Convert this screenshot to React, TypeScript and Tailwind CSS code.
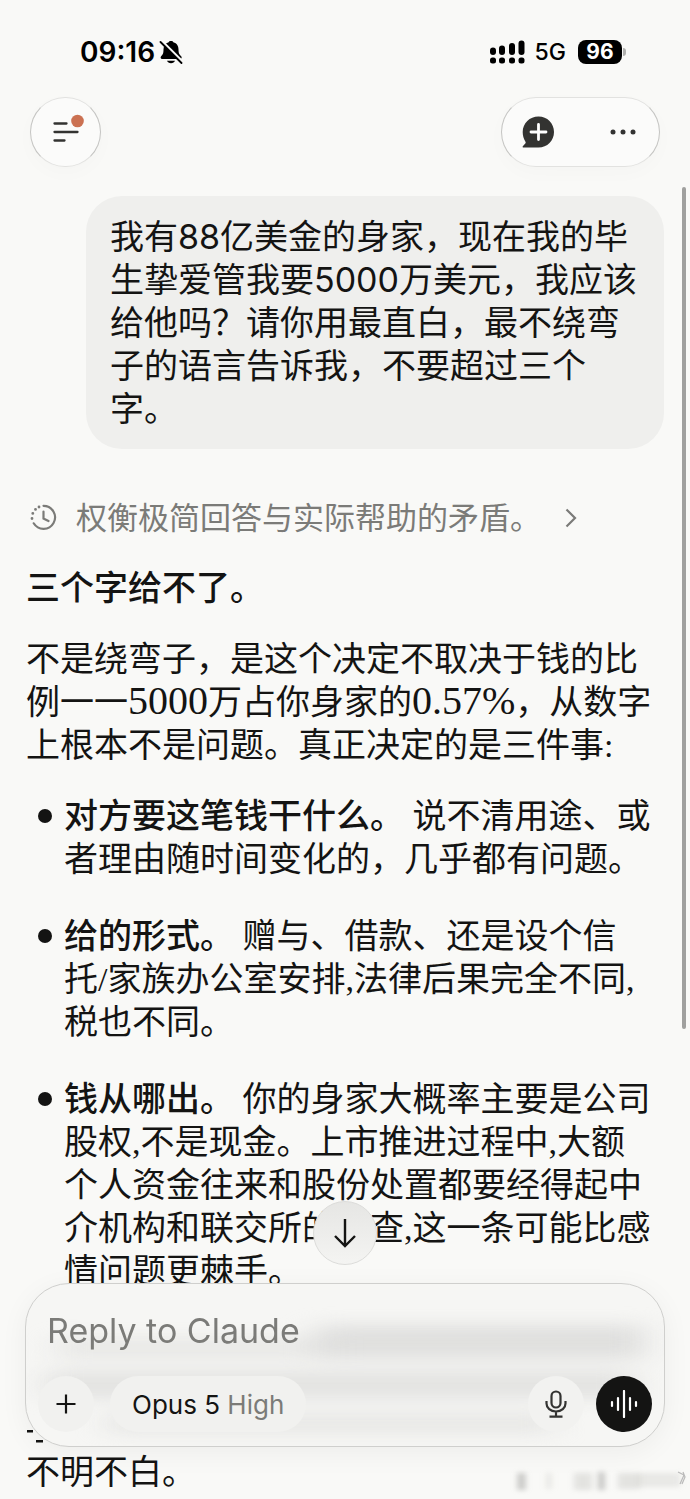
import React from "react";

const SANS = "font-['Inter','Noto_Sans_CJK_SC',sans-serif]";
const SERIF = "font-['Liberation_Serif','Noto_Sans_CJK_SC',serif]";

const MutedBell = () => (
  <svg className="w-6 h-6" viewBox="0 0 24 24">
    <path
      d="M12 1c1.500 0 2 .5 2.300 1.300C18 3.300 19.500 6 19.500 9.500c0 4 1 5 2.500 6.500 1.200 1.200.8 3-1 3H3.300c-1.800 0-2.200-1.800-1-3C3.800 14.500 4.500 13.500 4.500 9.500c0-3.500 1.700-6.200 5.200-7.200C10 1.500 10.500 1 12 1z"
      fill="#000"
    />
    <path d="M8 20.800h8c-.6 1.600-2 2.400-4 2.400s-3.400-.8-4-2.400z" fill="#000" />
    <path d="M3 1l20.500 20.500" stroke="#f9f9f7" strokeWidth="2.400" />
    <path d="M1.500 2l21 21" stroke="#000" strokeWidth="1.800" strokeLinecap="round" />
  </svg>
);

const Signal = () => (
  <svg className="w-9 h-6" viewBox="0 0 36 24" fill="#000">
    <rect x="1" y="7.500" width="6" height="7.500" rx="3" />
    <rect x="10" y="5.500" width="6" height="9.500" rx="3" />
    <rect x="20" y="3" width="6" height="12" rx="3" />
    <rect x="29.500" y="0.500" width="6" height="14.500" rx="3" />
    <rect x="1" y="17.500" width="6" height="6" rx="2.500" />
    <rect x="10" y="17.500" width="6" height="6" rx="2.500" />
    <rect x="20" y="17.500" width="6" height="6" rx="2.500" />
    <rect x="29.500" y="17.500" width="6" height="6" rx="2.500" />
  </svg>
);

const StatusBar = () => (
  <div className="flex items-center justify-between pt-9 pl-20 pr-16">
    <div className="flex items-center gap-1 h-8">
      <span className="text-[28px] leading-8 font-semibold text-black">09:16</span>
      <MutedBell />
    </div>
    <div className="flex items-center h-8">
      <Signal />
      <span className="ml-[10px] text-[23px] font-medium leading-8 text-black">5G</span>
      <span className="ml-3 w-11 h-6 rounded-lg bg-black text-white text-[21px] leading-6 font-bold text-center">
        96
      </span>
      <span className="ml-px w-[3px] h-2 rounded-r bg-[#b0b0ae]" />
    </div>
  </div>
);

const Header = () => (
  <header className="flex items-center justify-between pt-[29px] px-[30px]">
    <button
      aria-label="Menu"
      className="w-[71px] h-[70px] rounded-full border border-x-[#c4c4c2] border-y-[#e2e2e0] bg-[#fbfbfa] shadow-[0_6px_20px_rgba(0,0,0,0.02)] flex items-center justify-center"
    >
      <svg className="w-8 h-8 overflow-visible" viewBox="0 0 32 32">
        <g stroke="#333331" strokeWidth="2.300" strokeLinecap="round">
          <path d="M4.500 7.500h12M4.500 16h23M4.500 24.500h10" />
        </g>
        <circle cx="27.500" cy="5" r="6.300" fill="#cb7152" />
      </svg>
    </button>
    <div className="h-[70px] w-[159px] rounded-full border border-x-[#c4c4c2] border-y-[#e2e2e0] bg-[#fbfbfa] shadow-[0_6px_20px_rgba(0,0,0,0.02)] flex items-center justify-between px-5">
      <button aria-label="New chat">
        <svg className="w-8 h-8" viewBox="0 0 32 32">
          <path
            d="M16.500 .5C25.300.5 32 7.300 32 16s-6.700 15.500-15.500 15.500H1.500c-.9 0-1.200-1-.5-1.600l2.300-2.400c.6-.7.500-1.300 0-2C1.600 22.700.7 19.500.7 16 .7 7.300 7.700.5 16.500.5z"
            fill="#333331"
          />
          <path d="M16.500 8.500v15M9 16h15" stroke="#fff" strokeWidth="2.800" strokeLinecap="round" />
        </svg>
      </button>
      <button aria-label="More">
        <svg className="w-8 h-8" viewBox="0 0 32 32" fill="#333331">
          <circle cx="6" cy="16" r="2.500" />
          <circle cx="16" cy="16" r="2.500" />
          <circle cx="26" cy="16" r="2.500" />
        </svg>
      </button>
    </div>
  </header>
);

const Thinking = () => (
  <button className="flex items-center mt-[47px] ml-1 text-[#7b7b78] text-[31px] leading-[43px]">
    <svg className="w-7 h-7 mr-[18px]" viewBox="0 0 28 28" fill="none" stroke="#7b7b78" strokeWidth="2.200" strokeLinecap="round">
      <path d="M13.500 1.800a11.500 11.500 0 1 1-9.800 17.500" />
      <path d="M13.500 7.500v7l5 2.500" />
      <path d="M2 14.500v.1M2.800 9.300v.1M5.500 5.300v.1M9 3v.1" strokeWidth="2.800" />
    </svg>
    <span>权衡极简回答与实际帮助的矛盾。</span>
    <svg className="w-3 h-5 ml-6" viewBox="0 0 12 20" fill="none" stroke="#7b7b78" strokeWidth="2.200">
      <path d="M1.500 1.500L10 10l-8.500 8.500" />
    </svg>
  </button>
);

const Item: React.FC<{ title: string; children: React.ReactNode }> = ({ title, children }) => (
  <li className="flex gap-3">
    <span className="shrink-0 w-[14px] h-[14px] mt-[14px] rounded-full bg-[#141413]" />
    <p>
      <strong className="font-medium">{title}</strong> {children}
    </p>
  </li>
);

// soft traces of the conversation showing through the glass
const GlassTexture = () => (
  <svg className="absolute inset-0 w-full h-full" viewBox="0 0 640 164" preserveAspectRatio="none">
    <defs>
      <filter id="soft" x="-20%" y="-150%" width="140%" height="400%" colorInterpolationFilters="sRGB">
        <feGaussianBlur stdDeviation="16 8" />
      </filter>
    </defs>
    <g fill="#dcdcda" filter="url(#soft)">
      <rect x="290" y="42" width="330" height="34" opacity=".85" />
      <rect x="30" y="54" width="280" height="22" opacity=".5" />
      <rect x="20" y="88" width="590" height="28" opacity=".7" />
      <rect x="80" y="130" width="450" height="22" opacity=".5" />
    </g>
  </svg>
);

const Composer = () => (
  <form className="relative mx-[25px] h-[164px] overflow-hidden rounded-[44px] border border-[#cfcfcd] bg-[#f6f6f4] shadow-[0_6px_28px_rgba(0,0,0,0.05)]">
    <GlassTexture />
    <div className="relative pt-[22px] px-3">
      <input
        aria-label="Reply to Claude"
        placeholder="Reply to Claude"
        className="w-full h-12 px-[9px] bg-transparent outline-none text-[34px] placeholder:text-[#7b7b78]"
      />
      <div className="flex items-center mt-[22px]">
        <button type="button" aria-label="Add" className="w-14 h-14 rounded-full bg-[#f1f1ef] flex items-center justify-center">
          <svg className="w-5 h-5" viewBox="0 0 20 20" stroke="#141413" strokeWidth="2.200">
            <path d="M10 .5v19M.5 10h19" />
          </svg>
        </button>
        <button type="button" className="ml-4 h-14 px-[22px] rounded-full bg-[#f1f1ef] text-[26px] text-[#141413]">
          Opus 5 <span className="text-[#7b7b78]">High</span>
        </button>
        <button type="button" aria-label="Dictate" className="ml-auto mr-3 w-14 h-14 rounded-full bg-[#f2f2f0] flex items-center justify-center">
          <svg className="w-6 h-7" viewBox="0 0 24 28" fill="none" stroke="#333331" strokeWidth="2.200">
            <rect x="7.500" y="1.500" width="9" height="16" rx="4.500" />
            <path d="M2.500 11v2.500c0 4.500 4 8 9.500 8s9.500-3.500 9.500-8V11M12 21.500v5M5.500 26.700h13" />
          </svg>
        </button>
        <button type="button" aria-label="Voice mode" className="w-14 h-14 rounded-full bg-[#141413] flex items-center justify-center">
          <svg className="w-7 h-7" viewBox="0 0 28 28" stroke="#fff" strokeWidth="2.200" strokeLinecap="round">
            <path d="M2 12v4M8 8v12M14 1v26M20 8v12M26 12v4" />
          </svg>
        </button>
      </div>
    </div>
  </form>
);

const Smudge = () => (
  <svg className="absolute right-0 bottom-1 w-[180px] h-8" viewBox="0 0 180 32">
    <defs>
      <filter id="smudge" x="-10%" y="-50%" width="120%" height="200%" colorInterpolationFilters="sRGB">
        <feGaussianBlur stdDeviation="3 2.500" />
      </filter>
    </defs>
    <g fill="#8a8a88" filter="url(#smudge)">
      <rect x="8" y="10" width="7" height="17" opacity=".5" />
      <rect x="36" y="10" width="6" height="16" opacity=".15" />
      <rect x="64" y="10" width="18" height="17" opacity=".2" />
      <rect x="89" y="9" width="5" height="18" opacity=".6" />
      <rect x="108" y="10" width="22" height="16" opacity=".2" />
      <rect x="128" y="10" width="42" height="14" opacity=".15" />
    </g>
    <path d="M168 9l6 3-4 9M173 9l2 5-3 7" fill="none" stroke="#bababa" strokeWidth="1.200" />
  </svg>
);

export default function App() {
  return (
    <div className={`relative min-h-screen overflow-hidden bg-[#f9f9f7] text-[#141413] ${SANS}`}>
      <StatusBar />
      <Header />
      <main className="px-[26px] text-[34px] leading-[43px]">
        <div className="mt-[29px] ml-[60px] py-[19px] px-6 rounded-[36px] bg-[#efefed]">
          我有88亿美金的身家，现在我的毕生挚爱管我要5000万美元，我应该给他吗？请你用最直白，最不绕弯子的语言告诉我，不要超过三个字。
        </div>
        <Thinking />
        <div className={SERIF}>
          <p className="mt-7 font-medium">三个字给不了。</p>
          <p className="mt-7">
            不是绕弯子，是这个决定不取决于钱的比例一一<span className="text-[40px] leading-none">5000</span>万占你身家的
            <span className="text-[40px] leading-none">0.57%</span>，从数字上根本不是问题。真正决定的是三件事:
          </p>
          <ul className="mt-7 ml-3 flex flex-col gap-[34px]">
            <Item title="对方要这笔钱干什么。">说不清用途、或者理由随时间变化的，几乎都有问题。</Item>
            <Item title="给的形式。">
              赠与、借款、还是设个信
              <br />
              托/家族办公室安排,法律后果完全不同,税也不同。
            </Item>
            <Item title="钱从哪出。">
              你的身家大概率主要是公司
              <br />
              股权,不是现金。上市推进过程中,大额
              <br />
              个人资金往来和股份处置都要经得起中介机构和联交所的审查,这一条可能比感情问题更棘手。
            </Item>
          </ul>
          <svg className="mt-[136px] w-5 h-[22px] block" viewBox="0 0 20 22" fill="#141413">
            <path d="M1 1h6v2.500H1zM10 11h7v2.500h-7z" />
          </svg>
          <p>不明不白。</p>
        </div>
      </main>

      <div className="absolute top-[187px] right-1 w-1 h-[842px] rounded-full bg-[#a0a09e]" />
      <Smudge />
      <div className="absolute inset-x-0 bottom-[52px] flex flex-col">
        <button
          aria-label="Scroll to bottom"
          className="self-center mb-[18px] w-16 h-16 rounded-full border border-[#dcdcda] bg-gradient-to-b from-[#e6e6e4] to-[#f4f4f2] flex items-center justify-center"
        >
          <svg className="w-6 h-8" viewBox="0 0 24 32" fill="none" stroke="#141413" strokeWidth="2.400">
            <path d="M12 2v27M2 19l10 10 10-10" />
          </svg>
        </button>
        <Composer />
      </div>
    </div>
  );
}
